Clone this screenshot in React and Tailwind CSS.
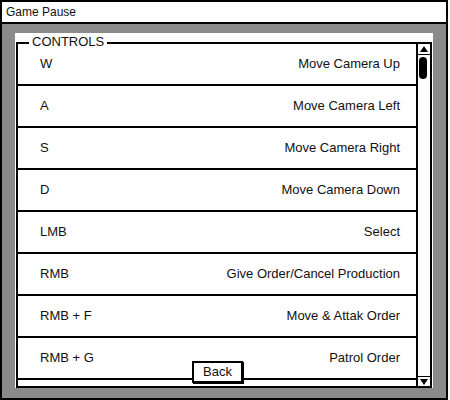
import React from "react";

const rows = [
  ["W", "Move Camera Up"],
  ["A", "Move Camera Left"],
  ["S", "Move Camera Right"],
  ["D", "Move Camera Down"],
  ["LMB", "Select"],
  ["RMB", "Give Order/Cancel Production"],
  ["RMB + F", "Move & Attak Order"],
  ["RMB + G", "Patrol Order"],
];

export default function App() {
  return (
    <div className="w-[450px] h-[400px] bg-white" style={{ fontFamily: '"Liberation Sans", Arial, sans-serif' }}>
      <div className="w-[448px] h-[400px] border-2 border-black flex flex-col bg-[#8a8a8a] text-[#111]">
        <div className="h-[22px] shrink-0 bg-white border-b-2 border-black flex items-center pl-[4px] text-[12px] leading-none">
          Game Pause
        </div>
        <div className="flex-1 flex flex-col px-[13px] pt-[9px] pb-[10px]">
          <div className="flex-1 bg-white flex flex-col px-[1px] pt-[9px] relative">
            <div className="flex-1 border-2 border-black relative flex">
              <div className="absolute left-[11px] top-[-9px] h-[14px] leading-[14px] px-[3px] bg-white text-[13px]">
                CONTROLS
              </div>
              <div className="flex-1 flex flex-col">
                {rows.map(([k, v]) => (
                  <div key={k} className="h-[42px] shrink-0 border-b-2 border-black flex items-center justify-between pl-[22px] pr-[16px] text-[13px]">
                    <span>{k}</span>
                    <span>{v}</span>
                  </div>
                ))}
              </div>
              <div className="w-[14px] border-l-2 border-black flex flex-col">
                <div className="h-[11px] border-b border-black flex items-center justify-center">
                  <svg width="8" height="6" viewBox="0 0 8 6"><polygon points="4,0 8,6 0,6" fill="#000" /></svg>
                </div>
                <div className="flex-1 pt-[2px] pl-[1px] pr-[3px]">
                  <div className="h-[22px] w-[8px] rounded-full bg-black" />
                </div>
                <div className="h-[10px] border-t border-black flex items-center justify-center">
                  <svg width="8" height="6" viewBox="0 0 8 6"><polygon points="0,0 8,0 4,6" fill="#000" /></svg>
                </div>
              </div>
            </div>
            <div className="absolute left-[177px] top-[328px] w-[51px] h-[22px] bg-white border-2 border-black shadow-[1px_1px_0_#000] flex items-center justify-center text-[13px]">
              Back
            </div>
          </div>
        </div>
      </div>
    </div>
  );
}
